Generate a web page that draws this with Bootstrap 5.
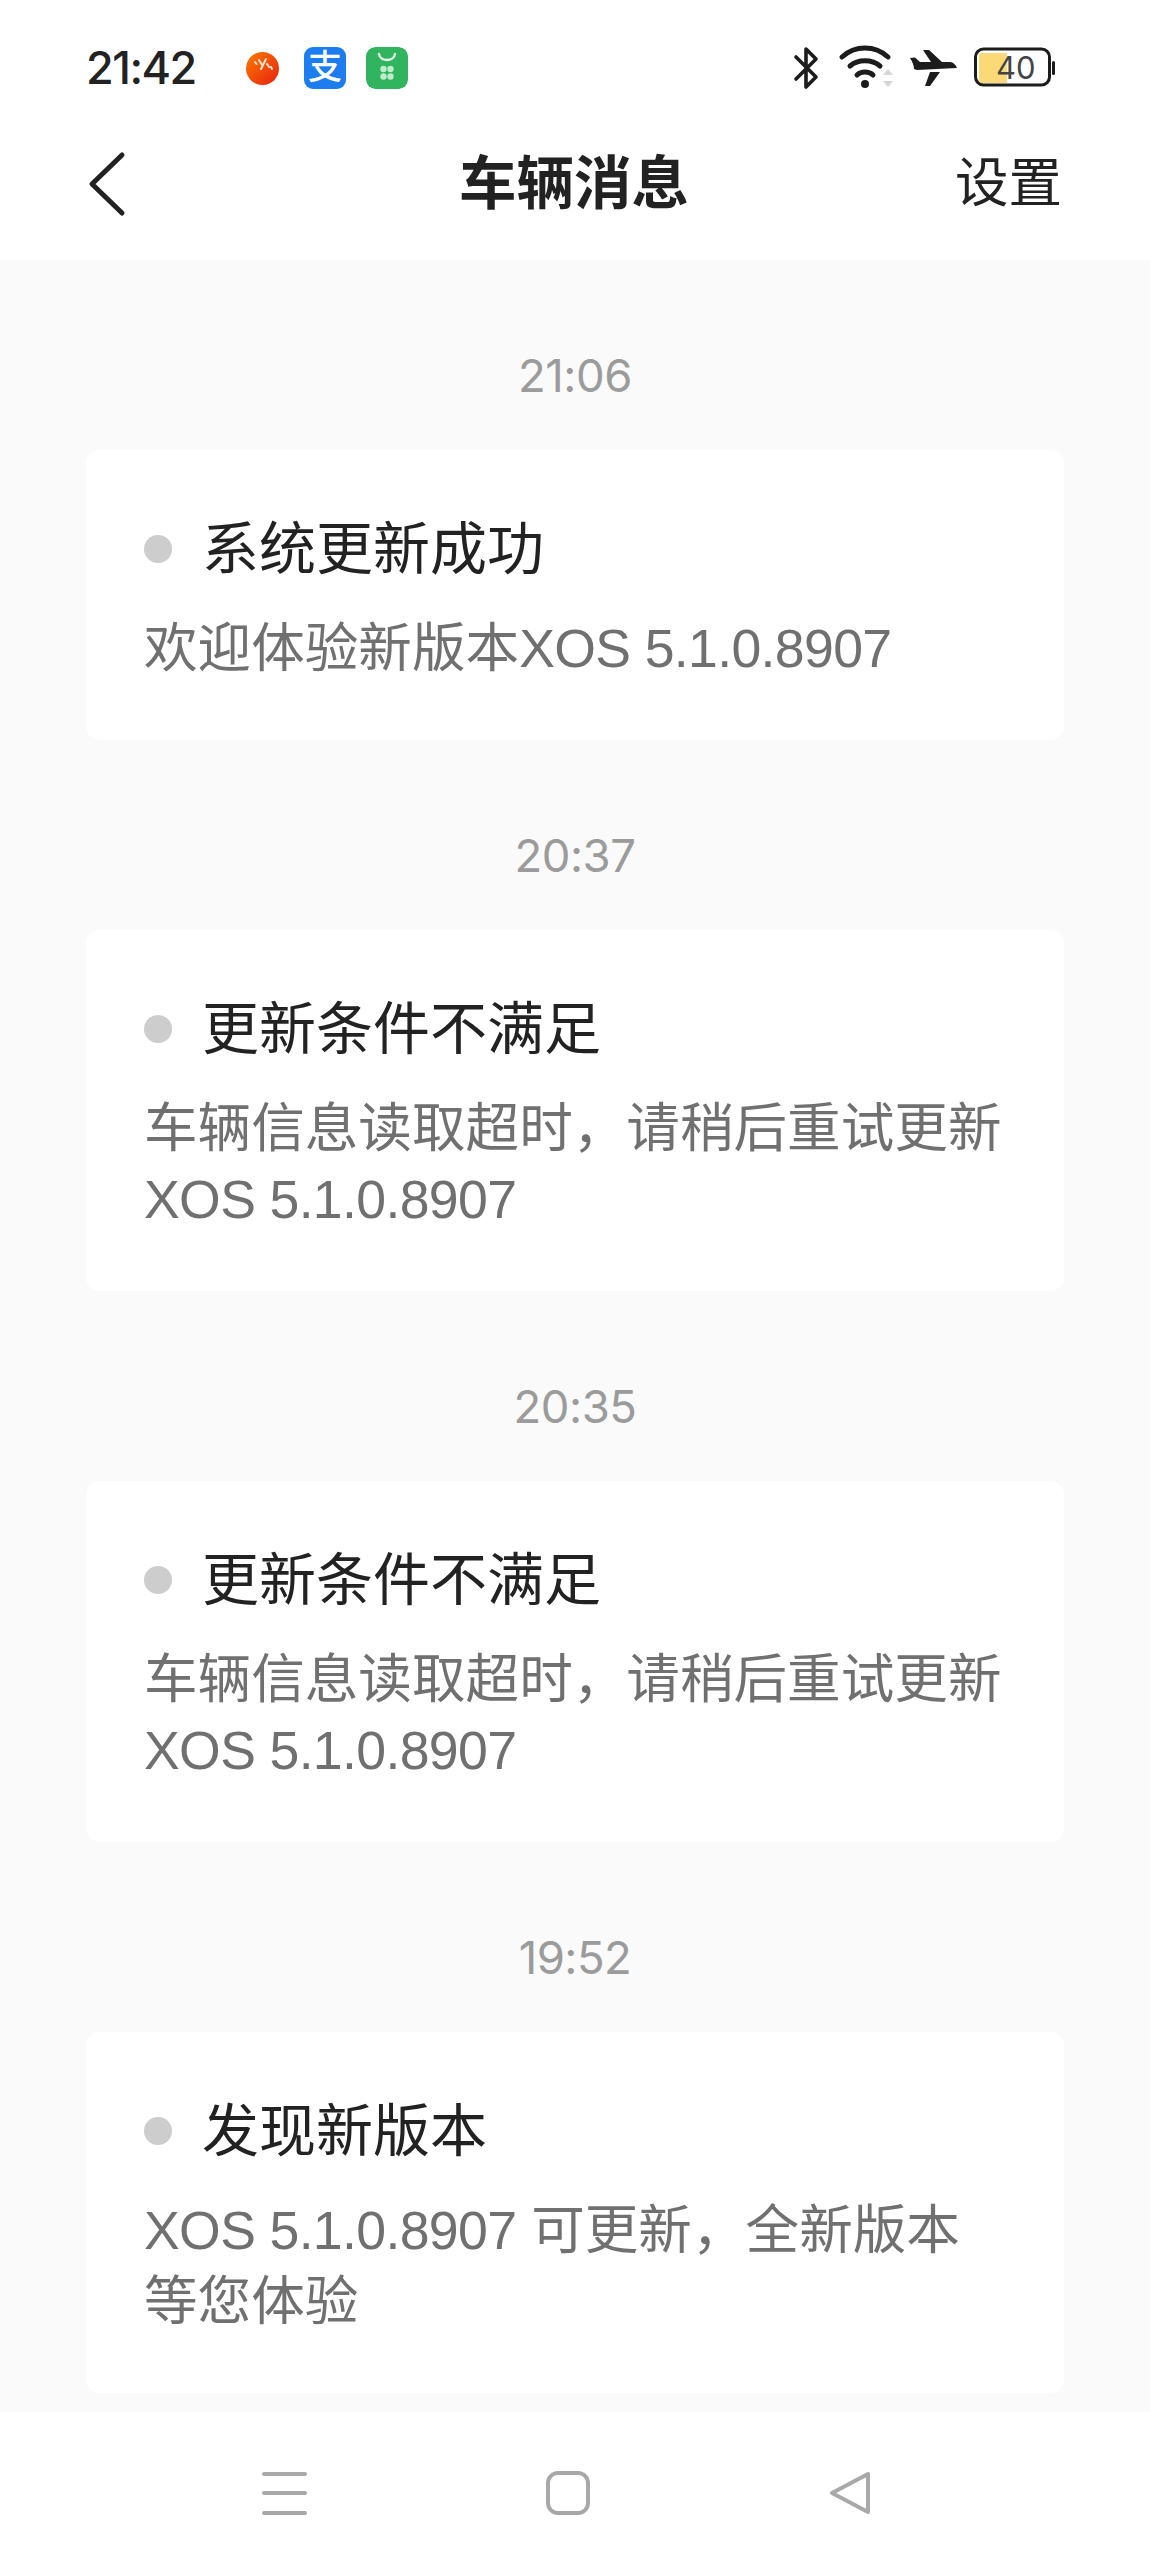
<!DOCTYPE html>
<html lang="zh-CN">
<head>
    <meta charset="UTF-8">
    <meta name="viewport" content="width=device-width, initial-scale=1.0">
    <title>车辆消息</title>
    <link href="https://cdn.jsdelivr.net/npm/bootstrap@5.3.0/dist/css/bootstrap.min.css" rel="stylesheet">
    <style>
        body {
            font-family: "Liberation Sans", "Noto Sans CJK SC", sans-serif;
            background: #fff;
            color: #222;
        }
        .phone-screen { width: 1150px; height: 2571px; overflow: hidden; }
        .status-row { height: 136px; padding: 0 95px 0 86px; }
        .clock { font-family: Inter, "Liberation Sans", sans-serif; font-size: 45px; font-weight: 500; letter-spacing: -1.5px; color: #222; width: 160px; }
        .app-icons { gap: 20px; }
        .orange-dot { width: 33px; height: 33px; margin-right: 5px; }
        .app-tile { width: 42px; height: 42px; border-radius: 9px; }
        .alipay-tile { background: #1c7df0; color: #fff; font-size: 34px; line-height: 40px; font-weight: 500; }
        .sys-icons { gap: 0; }
        .top-bar { height: 124px; padding: 0 88px 28px 86px; }
        .top-side { flex: 1 1 0; }
        .top-title { font-size: 57.5px; font-weight: 700; color: #222; line-height: 96px; }
        .top-link { font-size: 53.5px; color: #222; line-height: 96px; }
        .msg-list { background: #fafafa; padding: 86px 86px 0; overflow: hidden; }
        .msg-time { font-family: Inter, "Liberation Sans", sans-serif; font-size: 45.5px; line-height: 60px; color: #9b9b9b; margin-bottom: 44px; letter-spacing: -.5px; }
        .msg-card { border: 0; border-radius: 14px; background: #fff; padding: 59px 58px 55px; margin-bottom: 86px; }
        .msg-head { height: 80px; gap: 30px; margin-bottom: 24px; }
        .msg-dot { width: 28px; height: 28px; border-radius: 50%; background: #cdcdcd; }
        .msg-title { font-size: 57px; line-height: 80px; color: #222; }
        .msg-body { font-size: 53.6px; line-height: 71px; color: #707070; padding-bottom: 1px; }
        .ver-text { letter-spacing: -.65px; }
        .nav-strip { height: 159px; background: #fff; padding: 58px 276px 0 262px; }
    </style>
</head>
<body>
<div class="phone-screen d-flex flex-column">
    <!-- status bar -->
    <div class="status-row d-flex align-items-center flex-shrink-0">
        <div class="clock">21:42</div>
        <div class="app-icons d-flex align-items-center">
            <svg class="orange-dot" viewBox="0 0 33 33">
                <defs><linearGradient id="og" x1="0" y1="0" x2="1" y2="1"><stop offset="0" stop-color="#ff7a00"/><stop offset="1" stop-color="#e8200f"/></linearGradient></defs>
                <circle cx="16.5" cy="16.5" r="16.5" fill="url(#og)"/>
                <path d="M9 10l1.500 2M13 8l3 5M20 7l-5 10M21 12l2 3M25 15l1 2" stroke="#ffe6d0" stroke-width="2" stroke-linecap="round" fill="none"/>
            </svg>
            <div class="app-tile alipay-tile text-center">支</div>
            <svg class="app-tile" viewBox="0 0 42 42">
                <rect width="42" height="42" rx="9" fill="#30b45e"/>
                <path d="M13 7c1 8 15 8 16 0" stroke="#dff5e6" stroke-width="2.4" fill="none" stroke-linecap="round"/>
                <circle cx="17.5" cy="22" r="3.2" fill="#bfeccd"/><circle cx="24.5" cy="22" r="3.2" fill="#bfeccd"/>
                <circle cx="17.5" cy="29.5" r="3.2" fill="#bfeccd"/><circle cx="24.5" cy="29.5" r="3.2" fill="#bfeccd"/>
            </svg>
        </div>
        <div class="sys-icons d-flex align-items-center ms-auto">
            <svg width="262" height="46" viewBox="0 0 262 46">
                <!-- bluetooth -->
                <path d="M3 12l20 20-10 10V4l10 10L3 34" fill="none" stroke="#1c1c1c" stroke-width="3.6" stroke-linejoin="round" stroke-linecap="round"/>
                <!-- wifi -->
                <path d="M50 13c13-12 33-12 46 0M58 22c8-7 22-7 30 0M65 31c4-4 12-4 16 0" fill="none" stroke="#1c1c1c" stroke-width="5" stroke-linecap="round" transform="translate(-1 -1)"/>
                <circle cx="72" cy="39" r="4" fill="#1c1c1c"/>
                <path d="M90 30l5-6 5 6zM90 36l5 6 5-6z" fill="#d6d6d6"/>
                <!-- plane -->
                <path d="M117 13l5-.5 5 4.500h11l-8-12h6l13 12h8c3 0 6 3 7 6l-40 2-3-1c0-4-2-8-4-11zM137 27h10l-10 14h-5z" fill="#1c1c1c"/>
                <!-- battery -->
                <rect x="183" y="3" width="74" height="36" rx="8" fill="none" stroke="#1c1c1c" stroke-width="3" transform="translate(-.5 1)"/>
                <path d="M186 10a3 3 0 0 1 3-3h25v30h-25a3 3 0 0 1-3-3z" fill="#fbd976" transform="translate(0 1)"/>
                <rect x="259" y="16" width="3" height="14" rx="1.500" fill="#1c1c1c"/>
                <text x="203" y="34" font-family="Inter, 'Liberation Sans', sans-serif" font-size="31" fill="#444">40</text>
            </svg>
        </div>
    </div>

    <!-- title bar -->
    <div class="top-bar d-flex align-items-center flex-shrink-0">
        <div class="top-side">
            <svg width="40" height="66" viewBox="0 0 40 66">
                <path d="M36 4L6 33l30 29" fill="none" stroke="#222" stroke-width="5" stroke-linecap="round" stroke-linejoin="round"/>
            </svg>
        </div>
        <div class="top-title">车辆消息</div>
        <div class="top-side text-end"><span class="top-link">设置</span></div>
    </div>

    <!-- messages -->
    <div class="msg-list flex-grow-1">
        <div class="msg-time text-center">21:06</div>
        <div class="card msg-card">
            <div class="msg-head d-flex align-items-center"><span class="msg-dot"></span><span class="msg-title">系统更新成功</span></div>
            <div class="msg-body">欢迎体验新版本<span class="ver-text">XOS 5.1.0.8907</span></div>
        </div>

        <div class="msg-time text-center">20:37</div>
        <div class="card msg-card">
            <div class="msg-head d-flex align-items-center"><span class="msg-dot"></span><span class="msg-title">更新条件不满足</span></div>
            <div class="msg-body">车辆信息读取超时，请稍后重试更新<br><span class="ver-text">XOS 5.1.0.8907</span></div>
        </div>

        <div class="msg-time text-center">20:35</div>
        <div class="card msg-card">
            <div class="msg-head d-flex align-items-center"><span class="msg-dot"></span><span class="msg-title">更新条件不满足</span></div>
            <div class="msg-body">车辆信息读取超时，请稍后重试更新<br><span class="ver-text">XOS 5.1.0.8907</span></div>
        </div>

        <div class="msg-time text-center">19:52</div>
        <div class="card msg-card">
            <div class="msg-head d-flex align-items-center"><span class="msg-dot"></span><span class="msg-title">发现新版本</span></div>
            <div class="msg-body"><span class="ver-text">XOS 5.1.0.8907</span> 可更新，全新版本<br>等您体验</div>
        </div>
    </div>

    <!-- nav buttons -->
    <div class="nav-strip d-flex align-items-start justify-content-between flex-shrink-0">
        <svg width="46" height="46" viewBox="0 0 46 46"><path d="M2 4h41M2 23h41M2 43h41" stroke="#a8a8a8" stroke-width="4" stroke-linecap="round"/></svg>
        <svg width="46" height="46" viewBox="0 0 46 46"><rect x="3" y="3" width="40" height="40" rx="10" fill="none" stroke="#a8a8a8" stroke-width="4"/></svg>
        <svg width="46" height="46" viewBox="0 0 46 46"><path d="M40 4v38L4 23z" fill="none" stroke="#a8a8a8" stroke-width="4" stroke-linejoin="round"/></svg>
    </div>
</div>
<script src="https://cdn.jsdelivr.net/npm/bootstrap@5.3.0/dist/js/bootstrap.bundle.min.js"></script>
</body>
</html>
